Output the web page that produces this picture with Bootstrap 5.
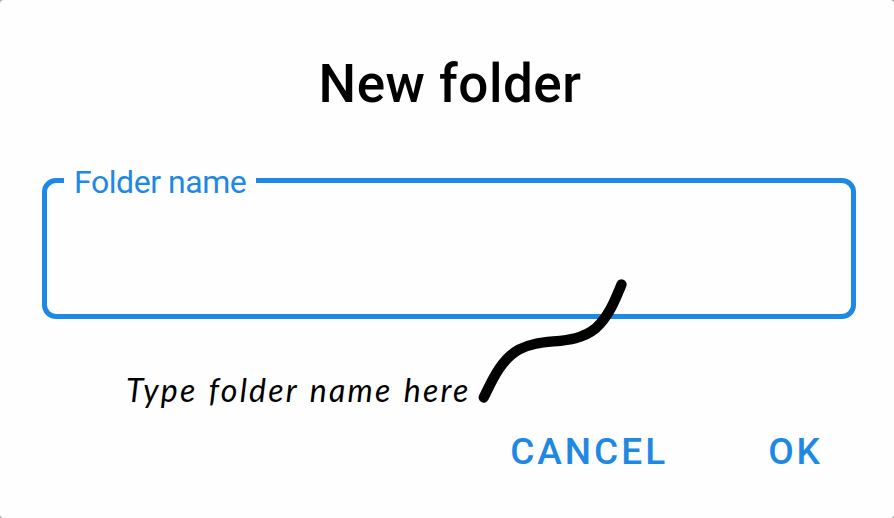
<!DOCTYPE html>
<html lang="en">
<head>
<meta charset="utf-8">
<meta name="viewport" content="width=device-width, initial-scale=1">
<title>New folder</title>
<link href="https://cdn.jsdelivr.net/npm/bootstrap@5.3.0/dist/css/bootstrap.min.css" rel="stylesheet">
<style>
body{background:#a8a8a8;font-family:Roboto,sans-serif}
.dialog-box{width:894px;height:518px;background:#fefefe;border-radius:4px;padding:52px 38px 0 42px}
.dialog-title{font-size:53px;line-height:64px;letter-spacing:.5px;font-weight:500;color:#000;padding-left:2px}
.name-field{height:157px;margin-top:46px;border:5px solid #1e88e5;border-radius:14px;padding:0 0 0 17px}
.name-field legend{font-size:32px;line-height:34px;color:#1e88e5;padding:3px 10px 0;margin:0;letter-spacing:-.45px}
.hint{font:italic 400 32px/40px Lato,sans-serif;color:#000;margin:51px 0 0 84px;letter-spacing:2.25px;word-spacing:1.5px;white-space:nowrap}
.action{font-size:37px;line-height:44px;letter-spacing:3px;font-weight:500;color:#1e88e5;border:0}
.actions{padding-right:33px;margin-top:20px;gap:100px}
.pointer-line{left:470px;top:270px}
</style>
</head>
<body>
<main class="dialog-box position-relative overflow-hidden">
  <h1 class="dialog-title text-center mb-0">New folder</h1>
  <fieldset class="name-field">
    <legend class="float-none w-auto">Folder name</legend>
  </fieldset>
  <p class="hint">Type folder name here</p>
  <div class="actions d-flex justify-content-end">
    <button class="action btn p-0" type="button">CANCEL</button>
    <button class="action btn p-0" type="button">OK</button>
  </div>
  <svg class="pointer-line position-absolute" width="170" height="145" viewBox="470 270 170 145" fill="none" stroke="#000" stroke-width="10.300" stroke-linecap="round" aria-hidden="true"><path d="M483.700 397.500C491 383 500 360 519 349.500C543 336.500 573 347 596 328C608 317 614 303 621.500 284.500"/></svg>
</main>
<script src="https://cdn.jsdelivr.net/npm/bootstrap@5.3.0/dist/js/bootstrap.bundle.min.js"></script>
</body>
</html>
